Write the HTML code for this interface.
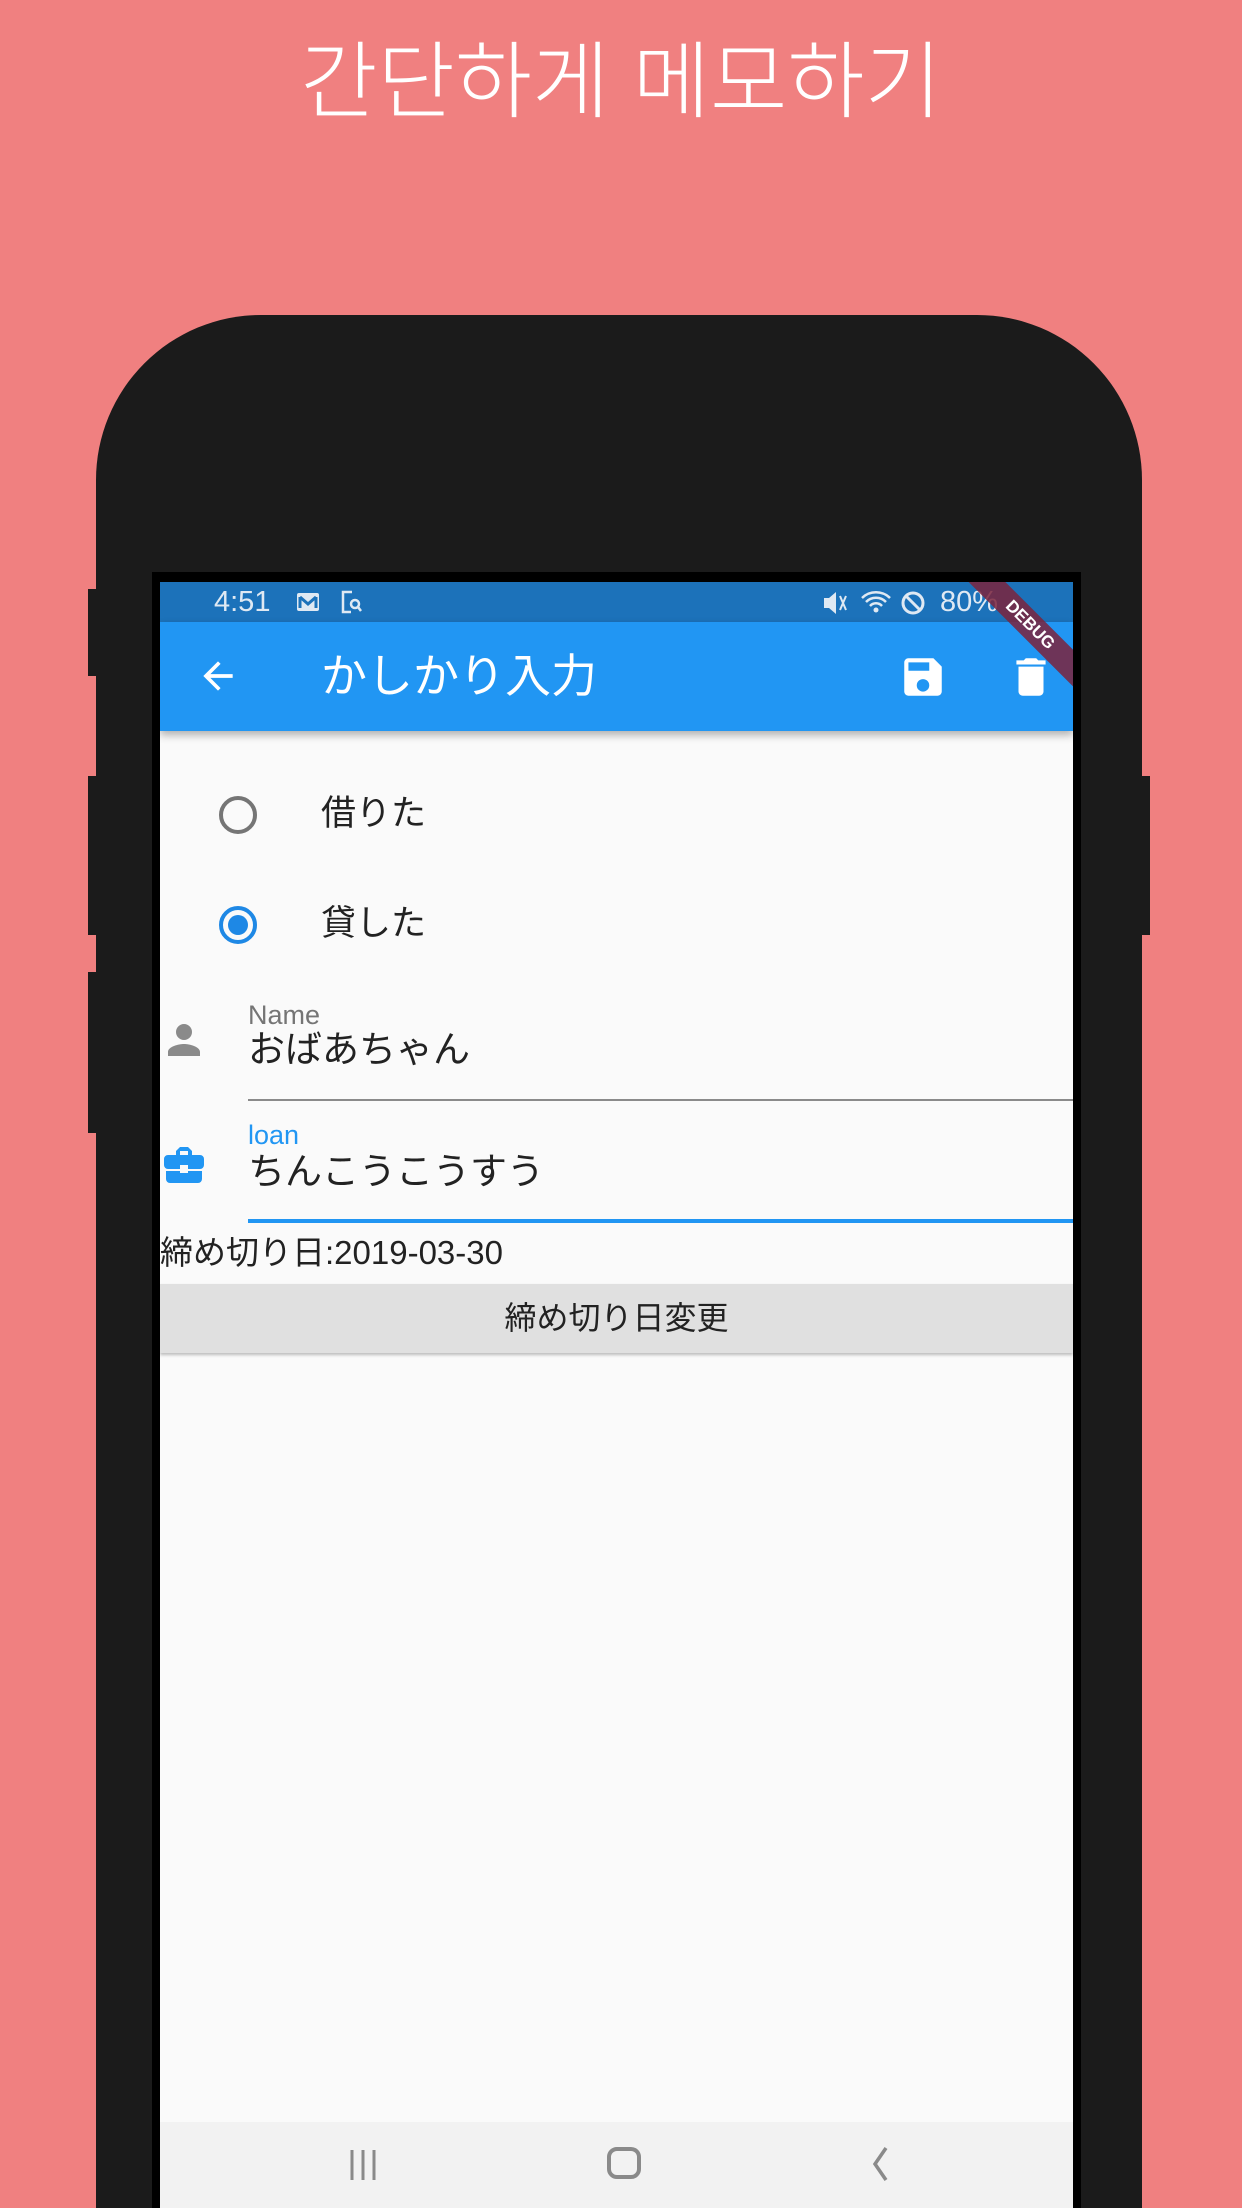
<!DOCTYPE html>
<html><head><meta charset="utf-8"><style>
*{margin:0;padding:0;box-sizing:border-box}
html,body{width:1242px;height:2208px;overflow:hidden}
body{background:#f08080;font-family:"Liberation Sans","Noto Sans CJK JP",sans-serif}
#wrap{position:relative;width:1242px;height:2208px;overflow:hidden;background:#f08080}
.abs{position:absolute}
.title{left:0;width:1242px;top:32px;text-align:center;color:#fff;font-size:84px;font-weight:300;font-family:"Liberation Sans","Noto Sans CJK KR",sans-serif;line-height:100px}
.body{left:96px;top:315px;width:1046px;height:1893px;background:#1b1b1b;border-radius:165px 165px 0 0}
.btn{background:#1b1b1b}
.screen{left:152px;top:572px;width:929px;height:1636px;background:#000}
.content{left:160px;top:582px;width:913px;height:1626px;background:#fafafa;overflow:hidden}
.status{left:0;top:0;width:913px;height:40px;background:#1c72ba;color:#dfe9f3;font-size:29px;line-height:40px}
.appbar{left:0;top:40px;width:913px;height:109px;background:#2196f3;box-shadow:0 4px 8px rgba(0,0,0,.3)}
.jp{font-family:"Liberation Sans","Noto Sans CJK JP",sans-serif}
.radio{width:38px;height:38px;border-radius:50%}
.nav{left:0;top:1540px;width:913px;height:86px;background:#f2f2f2}
</style></head><body><div id="wrap">
<div class="abs title">간단하게 메모하기</div>
<div class="abs btn" style="left:88px;top:589px;width:10px;height:87px"></div>
<div class="abs btn" style="left:88px;top:776px;width:10px;height:159px"></div>
<div class="abs btn" style="left:88px;top:972px;width:10px;height:161px"></div>
<div class="abs btn" style="left:1140px;top:776px;width:10px;height:159px"></div>
<div class="abs body"></div>
<div class="abs screen"></div>
<div class="abs content">
 <div class="abs status">
  <span class="abs" style="left:54px">4:51</span>
  <svg class="abs" style="left:136px;top:10px" width="24" height="20"><rect x="1" y="1" width="22" height="18" rx="2" fill="#dfe9f3"/><path d="M4 5v11M20 5v11M4 5l8 7 8-7" stroke="#1c72ba" stroke-width="3" fill="none"/></svg>
  <svg class="abs" style="left:180px;top:8px" width="24" height="24"><path d="M12 2H3v20h8" stroke="#dfe9f3" stroke-width="2.5" fill="none"/><circle cx="15" cy="14" r="4" stroke="#dfe9f3" stroke-width="2.5" fill="none"/><path d="M18 17l3 4" stroke="#dfe9f3" stroke-width="2.5"/></svg>
  <svg class="abs" style="left:662px;top:8px" width="28" height="26"><path d="M2 8h5l7-6v22l-7-6H2z" fill="#dfe9f3"/><path d="M18 6l6 14M24 6l-6 14" stroke="#dfe9f3" stroke-width="2"/></svg>
  <svg class="abs" style="left:700px;top:6px" width="32" height="28"><path d="M2 10a20 20 0 0 1 28 0M6 14a14 14 0 0 1 20 0M10 18a8 8 0 0 1 12 0" stroke="#dfe9f3" stroke-width="2.5" fill="none"/><circle cx="16" cy="22" r="2.5" fill="#dfe9f3"/></svg>
  <svg class="abs" style="left:740px;top:8px" width="26" height="26"><circle cx="13" cy="13" r="10" stroke="#dfe9f3" stroke-width="3" fill="none"/><path d="M6 6l14 14" stroke="#dfe9f3" stroke-width="3"/></svg>
  <span class="abs" style="left:780px">80%</span>
 </div>
 <div class="abs appbar">
  <svg class="abs" style="left:36px;top:32px" width="44" height="44" viewBox="0 0 24 24"><path d="M20 11H7.83l5.59-5.59L12 4l-8 8 8 8 1.41-1.41L7.83 13H20v-2z" fill="#fff"/></svg>
  <div class="abs jp" style="left:161px;top:24px;color:#fff;font-size:46px;line-height:60px">かしかり入力</div>
  <svg class="abs" style="left:738px;top:30px" width="50" height="50" viewBox="0 0 24 24"><path d="M17 3H5a2 2 0 0 0-2 2v14a2 2 0 0 0 2 2h14a2 2 0 0 0 2-2V7l-4-4zm-5 16a3 3 0 1 1 0-6 3 3 0 0 1 0 6zm3-10H5V5h10v4z" fill="#fff"/></svg>
  <svg class="abs" style="left:846px;top:30px" width="50" height="50" viewBox="0 0 24 24"><path d="M6 19a2 2 0 0 0 2 2h8a2 2 0 0 0 2-2V7H6v12zM19 4h-3.5l-1-1h-5l-1 1H5v2h14V4z" fill="#fff"/></svg>
 </div>
 <div class="abs" style="left:770px;top:30px;width:200px;height:26px;background:rgba(123,35,60,.85);transform:rotate(45deg);color:#fff;font-size:17px;font-weight:bold;text-align:center;line-height:26px">DEBUG</div>
 <div class="abs radio" style="left:59px;top:214px;border:4px solid #757575"></div>
 <div class="abs jp" style="left:161px;top:209px;font-size:35px;color:#222;line-height:46px">借りた</div>
 <div class="abs radio" style="left:59px;top:324px;border:4px solid #1e88e5"><div style="margin:5px;width:20px;height:20px;border-radius:50%;background:#1e88e5"></div></div>
 <div class="abs jp" style="left:161px;top:319px;font-size:35px;color:#222;line-height:46px">貸した</div>
 <svg class="abs" style="left:0px;top:434px" width="48" height="48" viewBox="0 0 24 24"><path d="M12 12a4 4 0 1 0 0-8 4 4 0 0 0 0 8zm0 2c-2.7 0-8 1.3-8 4v2h16v-2c0-2.7-5.3-4-8-4z" fill="#8a8a8a"/></svg>
 <div class="abs" style="left:88px;top:418px;font-size:27px;color:#757575">Name</div>
 <div class="abs jp" style="left:88px;top:444px;font-size:37px;color:#222;line-height:48px">おばあちゃん</div>
 <div class="abs" style="left:88px;top:517px;width:825px;height:2px;background:#8a8a8a"></div>
 <svg class="abs" style="left:0px;top:559px" width="48" height="48" viewBox="0 0 24 24"><path d="M10 16v-1H3v4a2 2 0 0 0 2 2h14a2 2 0 0 0 2-2v-4h-7v1h-4zm10-9h-4V5l-2-2h-4L8 5v2H4a2 2 0 0 0-2 2v3a2 2 0 0 0 2 2h6v-2h4v2h6a2 2 0 0 0 2-2V9a2 2 0 0 0-2-2zm-6 0h-4V5h4v2z" fill="#2196f3"/></svg>
 <div class="abs" style="left:88px;top:538px;font-size:27px;color:#2196f3">loan</div>
 <div class="abs jp" style="left:88px;top:566px;font-size:37px;color:#222;line-height:48px">ちんこうこうすう</div>
 <div class="abs" style="left:88px;top:637px;width:825px;height:4px;background:#2196f3"></div>
 <div class="abs jp" style="left:0;top:649px;font-size:33px;color:#222;line-height:44px">締め切り日:2019-03-30</div>
 <div class="abs jp" style="left:0;top:702px;width:913px;height:69px;background:#e0e0e0;box-shadow:0 2px 3px rgba(0,0,0,.25);text-align:center;font-size:32px;line-height:69px;color:#222">締め切り日変更</div>
 <div class="abs nav">
  <svg class="abs" style="left:187px;top:26px" width="34" height="34"><path d="M5 2v30M16 2v30M27 2v30" stroke="#8a8a8a" stroke-width="3"/></svg>
  <div class="abs" style="left:447px;top:25px;width:34px;height:32px;border:4px solid #8a8a8a;border-radius:10px"></div>
  <svg class="abs" style="left:708px;top:24px" width="24" height="36"><path d="M18 2L7 18l11 16" stroke="#8a8a8a" stroke-width="3.5" fill="none"/></svg>
 </div>
</div>
</div></body></html>
